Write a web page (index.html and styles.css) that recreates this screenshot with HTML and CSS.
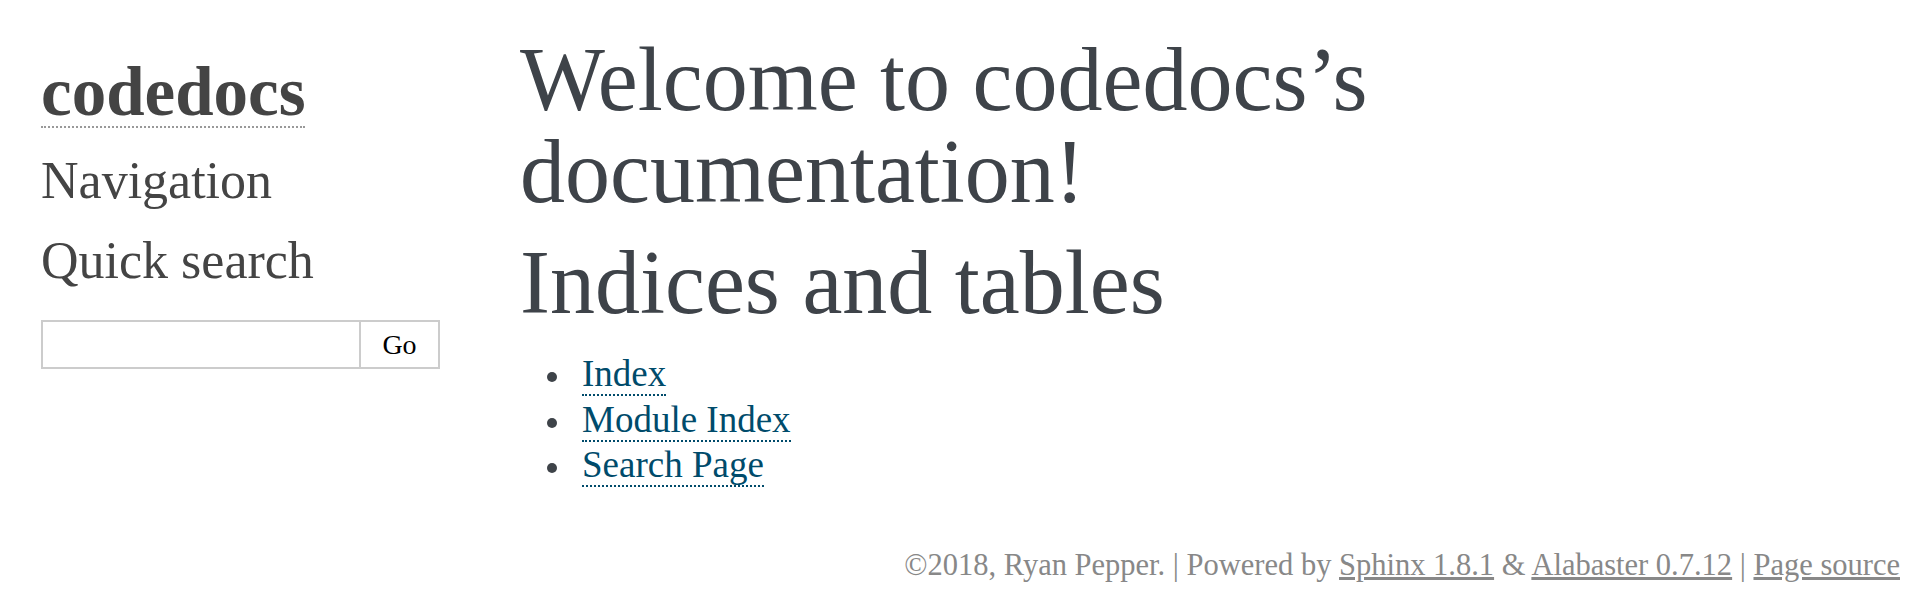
FILE: index.html
```html
<!DOCTYPE html>
<html lang="en">
<head>
<meta charset="utf-8">
<title>Welcome to codedocs’s documentation! — codedocs  documentation</title>
<link rel="stylesheet" href="styles.css">
</head>
<body>
<div class="document">
  <div class="sidebar">
    <h1 class="logo"><a href="#">codedocs</a></h1>
    <h3 class="side-title">Navigation</h3>
    <h3 class="side-title search-title">Quick search</h3>
    <form class="searchbox">
      <input type="text" class="search-input" aria-label="search">
      <button type="button" class="search-go">Go</button>
    </form>
  </div>
  <div class="body">
    <h1 class="title">Welcome to codedocs’s documentation!</h1>
    <h1 class="title second">Indices and tables</h1>
    <ul class="links">
      <li><a href="#">Index</a></li>
      <li><a href="#">Module Index</a></li>
      <li><a href="#">Search Page</a></li>
    </ul>
  </div>
</div>
<div class="footer">©2018, Ryan Pepper. | Powered by <a href="#">Sphinx 1.8.1</a> &amp; <a href="#">Alabaster 0.7.12</a> | <a href="#">Page source</a></div>
</body>
</html>
```
FILE: styles.css
```css
html, body {
  margin: 0;
  padding: 0;
  background: #ffffff;
}

body {
  font-family: "Liberation Serif", "Times New Roman", serif;
  color: #3E4349;
}

.document {
  width: 1880px;
  margin: 0 auto;
  display: flex;
  align-items: flex-start;
}

.sidebar {
  width: 440px;
  flex: 0 0 440px;
  box-sizing: border-box;
  padding: 58px 20px 0 21px;
}

.logo {
  margin: 0;
  font-size: 69px;
  line-height: 68px;
  font-weight: bold;
}

.logo a {
  display: inline-block;
  color: #444;
  text-decoration: none;
  border-bottom: 2px dotted #999;
}

.side-title {
  margin: 27px 0 0 0;
  font-size: 52px;
  line-height: 52px;
  font-weight: normal;
  color: #444;
}

.search-title {
  margin-top: 28px;
}

.searchbox {
  margin: 33px 0 0 0;
  display: flex;
}

.search-input {
  box-sizing: border-box;
  width: 320px;
  height: 49px;
  margin: 0;
  padding: 0 4px;
  border: 2px solid #ccc;
  font-family: "Liberation Serif", serif;
  font-size: 28px;
  background: #fff;
  outline: none;
}

.search-go {
  box-sizing: border-box;
  width: 81px;
  height: 49px;
  margin: 0;
  padding: 0;
  border: 2px solid #ccc;
  border-left: none;
  background: #fff;
  color: #000;
  font-family: "Liberation Serif", serif;
  font-size: 28px;
}

.body {
  flex: 1 1 auto;
  padding: 34px 60px 0 60px;
}

.title {
  margin: 0;
  font-size: 90px;
  line-height: 92px;
  font-weight: normal;
  color: #3E4349;
}

.title.second {
  margin-top: 19px;
}

.links {
  margin: 22px 0 0 0;
  padding: 0 0 0 62px;
  font-size: 37px;
  line-height: 45.5px;
  list-style: none;
}

.links li::before {
  content: "";
  display: inline-block;
  width: 10px;
  height: 10px;
  border-radius: 50%;
  background: #3E4349;
  margin-left: -35px;
  margin-right: 25px;
  vertical-align: 4px;
}

.links a {
  color: #004B6B;
  text-decoration: none;
  border-bottom: 2px dotted #004B6B;
}

.footer {
  width: 1880px;
  margin: 56px auto 0 auto;
  text-align: right;
  font-size: 30.5px;
  line-height: 43px;
  color: #888;
}

.footer a {
  color: #888;
  text-decoration: underline;
}
```
